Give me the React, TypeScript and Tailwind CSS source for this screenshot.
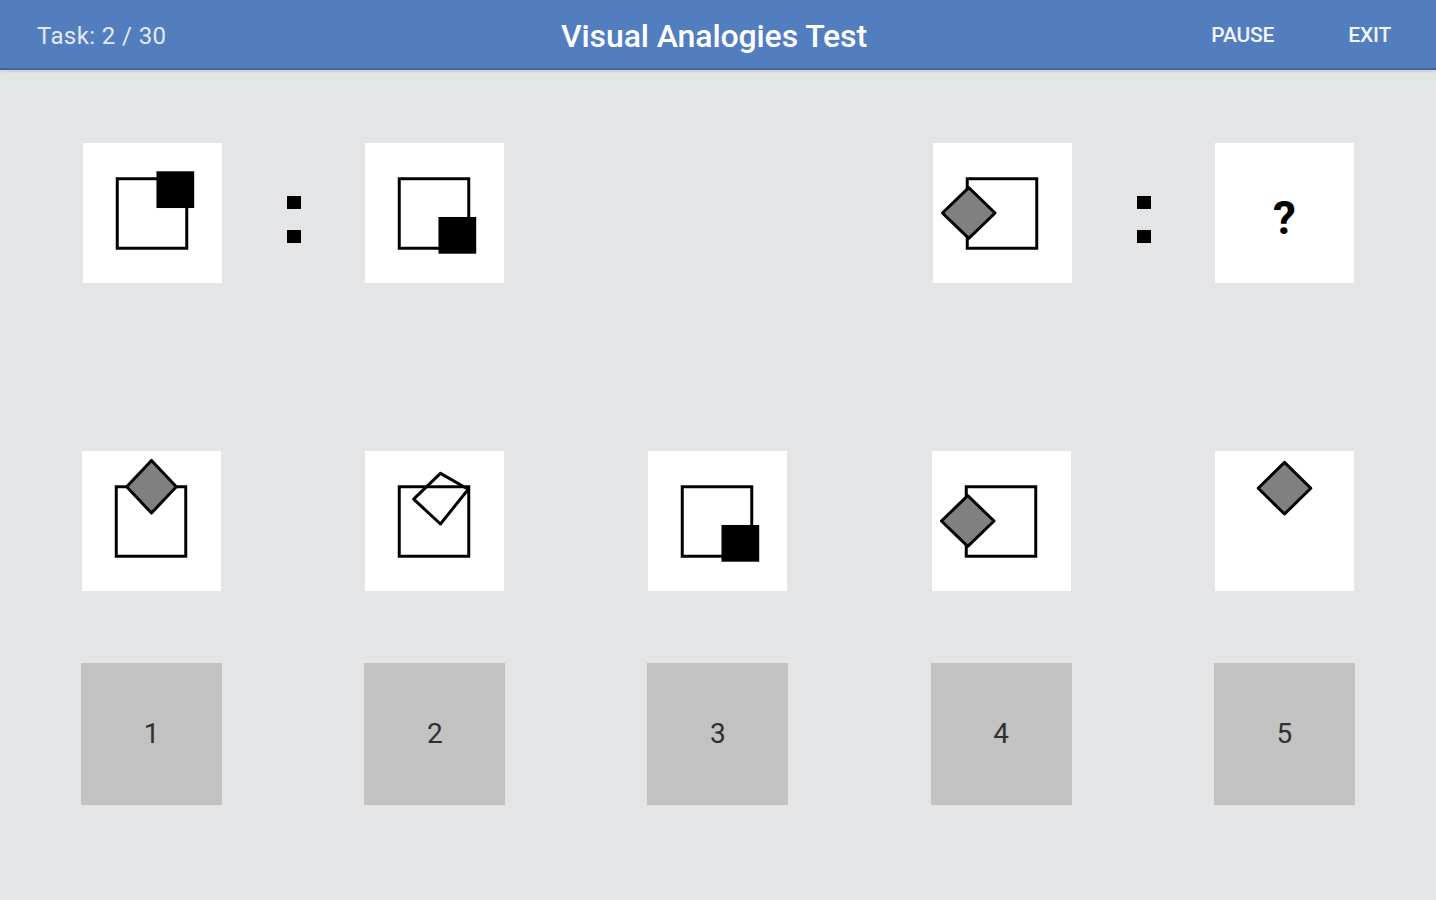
import type React from 'react'

type Shape =
  | { kind: 'frame' }
  | { kind: 'block'; x: number; y: number }
  | { kind: 'diamond'; pts: string; fill: string }

const FRAME: Shape = { kind: 'frame' }
const diamond = (cx: number, cy: number, hw: number, hh: number, fill = '#808080'): Shape => ({
  kind: 'diamond',
  pts: `${cx},${cy - hh} ${cx + hw},${cy} ${cx},${cy + hh} ${cx - hw},${cy}`,
  fill,
})

// figures in a 140x140 box, same coords as the cell
const FIG = {
  topRightBlock: [FRAME, { kind: 'block', x: 74, y: 28 }] as Shape[],
  bottomRightBlock: [FRAME, { kind: 'block', x: 74, y: 74 }] as Shape[],
  leftDiamond: [FRAME, diamond(36, 70, 26.5, 25.5)] as Shape[],
  topDiamond: [FRAME, diamond(70, 35.5, 25, 26.5)] as Shape[],
  tiltedOutline: [FRAME, { kind: 'diamond', pts: '76,22 104,38 76,73 49,48', fill: 'none' }] as Shape[],
  loneDiamond: [diamond(70, 37, 26.5, 26)] as Shape[],
}

function Figure({ shapes }: { shapes: Shape[] }) {
  return (
    <svg viewBox="0 0 140 140" className="h-[140px] w-[139px]">
      {shapes.map((s, i) => {
        if (s.kind === 'frame')
          return <rect key={i} x={34.5} y={35.5} width={70} height={70} fill="none" stroke="#000" strokeWidth={3} />
        if (s.kind === 'block') return <rect key={i} x={s.x} y={s.y} width={38} height={37} fill="#000" />
        return <polygon key={i} points={s.pts} fill={s.fill} stroke="#000" strokeWidth={3} strokeLinejoin="round" />
      })}
    </svg>
  )
}

function Cell({ children }: { children: React.ReactNode }) {
  return <div className="flex h-[140px] w-[139px] items-center justify-center bg-white">{children}</div>
}

function Colon() {
  return (
    <div className="mt-[12px] flex w-[15px] flex-col items-center gap-[21px]">
      <span className="h-[13px] w-[14px] bg-black" />
      <span className="h-[13px] w-[14px] bg-black" />
    </div>
  )
}

const OPTIONS = [FIG.topDiamond, FIG.tiltedOutline, FIG.bottomRightBlock, FIG.leftDiamond, FIG.loneDiamond]

export default function App() {
  return (
    <div className="min-h-[900px] bg-[#e4e5e7]" style={{ fontFamily: 'Roboto, "Noto Sans", sans-serif' }}>
      <header className="grid h-[70px] grid-cols-[1fr_auto_1fr] items-center border-b-2 border-[#3d67a8] bg-[#527dbf] pl-[37px] pr-[45px] pt-[4px] shadow-[0_1px_3px_rgba(0,0,0,0.15)]">
        <div className="text-[24px] tracking-[0.4px] text-[#e3eaf5]">Task: 2 / 30</div>
        <div className="text-center text-[32px] font-medium tracking-[-0.1px] text-white">
          Visual Analogies Test
        </div>
        <div className="flex items-center justify-end gap-[74px] text-[21px] font-medium tracking-[-0.2px] text-[#f1f4fa]">
          <span>PAUSE</span>
          <span>EXIT</span>
        </div>
      </header>

      <section className="flex justify-between pl-[83px] pr-[82px] pt-[73px]">
        <div className="flex items-center gap-[64px]">
          <Cell><Figure shapes={FIG.topRightBlock} /></Cell>
          <Colon />
          <Cell><Figure shapes={FIG.bottomRightBlock} /></Cell>
        </div>
        <div className="flex items-center gap-[64px]">
          <Cell><Figure shapes={FIG.leftDiamond} /></Cell>
          <Colon />
          <Cell>
            <span className="pt-[10px] text-[46px] font-bold text-black">?</span>
          </Cell>
        </div>
      </section>

      <section className="mt-[168px] grid grid-cols-5 px-[10px]">
        {OPTIONS.map((f, i) => (
          <div key={i} className="flex justify-center">
            <Cell><Figure shapes={f} /></Cell>
          </div>
        ))}
      </section>

      <section className="mt-[72px] grid grid-cols-5 px-[10px]">
        {[1, 2, 3, 4, 5].map((n) => (
          <div key={n} className="flex justify-center">
            <button className="flex h-[142px] w-[141px] items-center justify-center bg-[#c2c2c2] text-[28px] text-[#303030]">
              {n}
            </button>
          </div>
        ))}
      </section>
    </div>
  )
}
